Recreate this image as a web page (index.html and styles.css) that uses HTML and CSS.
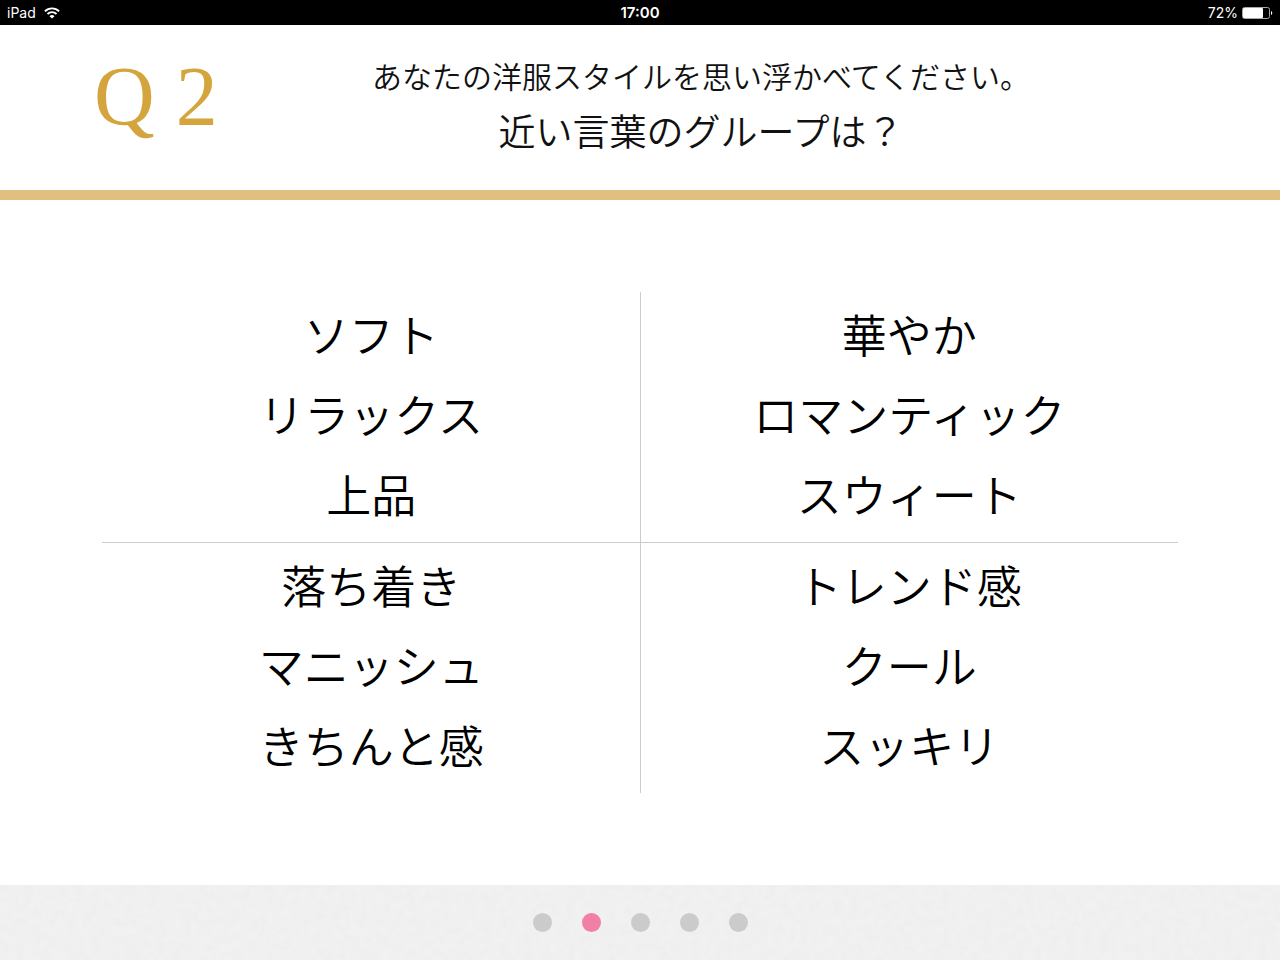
FILE: index.html
```html
<!DOCTYPE html>
<html lang="ja">
<head>
    <meta charset="UTF-8">
    <meta name="viewport" content="width=device-width, initial-scale=1.0">
    <title>Q2</title>
    <link rel="stylesheet" href="styles.css">
</head>
<body>
    <div class="status-bar">
        <div class="status-left">
            <span>iPad</span>
            <svg class="wifi" width="16" height="12" viewBox="0 0 16 12" fill="none" stroke="#fff" stroke-width="1.9">
                <path d="M0.9 4.3a10 10 0 0 1 14.2 0"/>
                <path d="M3.5 7a6.3 6.3 0 0 1 9 0"/>
                <path d="M8 11.6L5.5 9.2a3.5 3.5 0 0 1 5 0z" fill="#fff" stroke="none"/>
            </svg>
        </div>
        <div class="status-time">17:00</div>
        <div class="status-right">
            <span>72%</span>
            <svg width="31" height="12" viewBox="0 0 31 12">
                <rect x="0.5" y="0.5" width="27" height="11" rx="2" fill="none" stroke="#aaa"/>
                <rect x="1" y="1" width="20" height="10" rx="1" fill="#fff"/>
                <path d="M29 4a2.2 2.2 0 0 1 0 4z" fill="#fff"/>
            </svg>
        </div>
    </div>

    <header class="question">
        <div class="question-number">Q 2</div>
        <h1 class="question-text">
            <span class="lead">あなたの洋服スタイルを思い浮かべてください。</span>
            <span class="main">近い言葉のグループは？</span>
        </h1>
    </header>

    <main class="content">
        <div class="options">
            <button type="button" class="option">
                <span>ソフト</span>
                <span>リラックス</span>
                <span>上品</span>
            </button>
            <button type="button" class="option">
                <span>華やか</span>
                <span>ロマンティック</span>
                <span>スウィート</span>
            </button>
            <button type="button" class="option">
                <span>落ち着き</span>
                <span>マニッシュ</span>
                <span>きちんと感</span>
            </button>
            <button type="button" class="option">
                <span>トレンド感</span>
                <span>クール</span>
                <span>スッキリ</span>
            </button>
        </div>
    </main>

    <footer class="pager">
        <!-- paper grain -->
        <svg class="grain" width="100%" height="100%">
            <filter id="paper">
                <feTurbulence type="fractalNoise" baseFrequency="0.12" numOctaves="3" seed="4"/>
                <feColorMatrix values="0 0 0 0 0.5  0 0 0 0 0.5  0 0 0 0 0.5  1 0 0 0 -0.3"/>
            </filter>
            <rect width="100%" height="100%" filter="url(#paper)"/>
        </svg>
        <button type="button" class="dot" aria-label="Q1"></button>
        <button type="button" class="dot active" aria-label="Q2" aria-current="step"></button>
        <button type="button" class="dot" aria-label="Q3"></button>
        <button type="button" class="dot" aria-label="Q4"></button>
        <button type="button" class="dot" aria-label="Q5"></button>
    </footer>
</body>
</html>
```
FILE: styles.css
```css
* {
    box-sizing: border-box;
}

body {
    font-family: "Noto Sans CJK JP", sans-serif;
    font-weight: 350;
    display: flex;
    flex-direction: column;
    min-height: 100vh;
    margin: 0;
    background-color: #fff;
    color: #111;
}

/* status bar */
.status-bar {
    display: grid;
    grid-template-columns: 1fr auto 1fr;
    align-items: center;
    padding: 0 7px;
    background-color: #000;
    color: #fff;
    font-family: Inter, sans-serif;
    font-size: 14px;
    font-weight: 400;
    line-height: 25px;
}

.status-left,
.status-right {
    display: flex;
    align-items: center;
    gap: 8px;
}

.status-right {
    justify-content: flex-end;
    gap: 4px;
}

.status-time {
    font-size: 15px;
    font-weight: 600;
}

/* question */
.question {
    display: flex;
    align-items: flex-start;
    padding: 26px 108px 28px 94px;
    border-bottom: 10px solid #e0c080;
}

.question-number {
    width: 136px;
    color: #d3a53c;
    font-family: "Liberation Serif", serif;
    font-size: 84px;
    font-weight: 400;
    line-height: 92px;
    white-space: nowrap;
}

.question-text {
    flex: 1;
    margin: 0;
    text-align: center;
    font-weight: 350;
    white-space: nowrap;
}

.question-text span {
    display: block;
}

.lead {
    font-size: 30px;
    line-height: 48px;
}

.main {
    font-size: 37px;
    line-height: 63px;
}

/* options */
.content {
    flex: 1;
    display: flex;
    align-items: center;
    padding: 0 8%;
}

.options {
    flex: 1;
    display: grid;
    grid-template-columns: 1fr 1fr;
}

.option {
    display: flex;
    flex-direction: column;
    align-items: center;
    padding: 2px 0 8px;
    border: 0 solid #ccc;
    background: none;
    color: #000;
    font-family: inherit;
    font-size: 45px;
    font-weight: 350;
    line-height: 80px;
    cursor: pointer;
}

.option:nth-child(even) {
    border-left-width: 1px;
}

.option:nth-child(-n+2) {
    border-bottom-width: 1px;
}

/* pager */
.pager {
    position: relative;
    display: flex;
    align-items: center;
    justify-content: center;
    gap: 30px;
    height: 75px;
    background-color: #f1f1f1;
}

.grain {
    position: absolute;
    top: 0;
    left: 0;
    opacity: 0.1;
}

.dot {
    position: relative;
    width: 19px;
    height: 19px;
    padding: 0;
    border: none;
    border-radius: 50%;
    background-color: #cbcbcb;
    cursor: pointer;
}

.dot.active {
    background-color: #f180a6;
}
```
